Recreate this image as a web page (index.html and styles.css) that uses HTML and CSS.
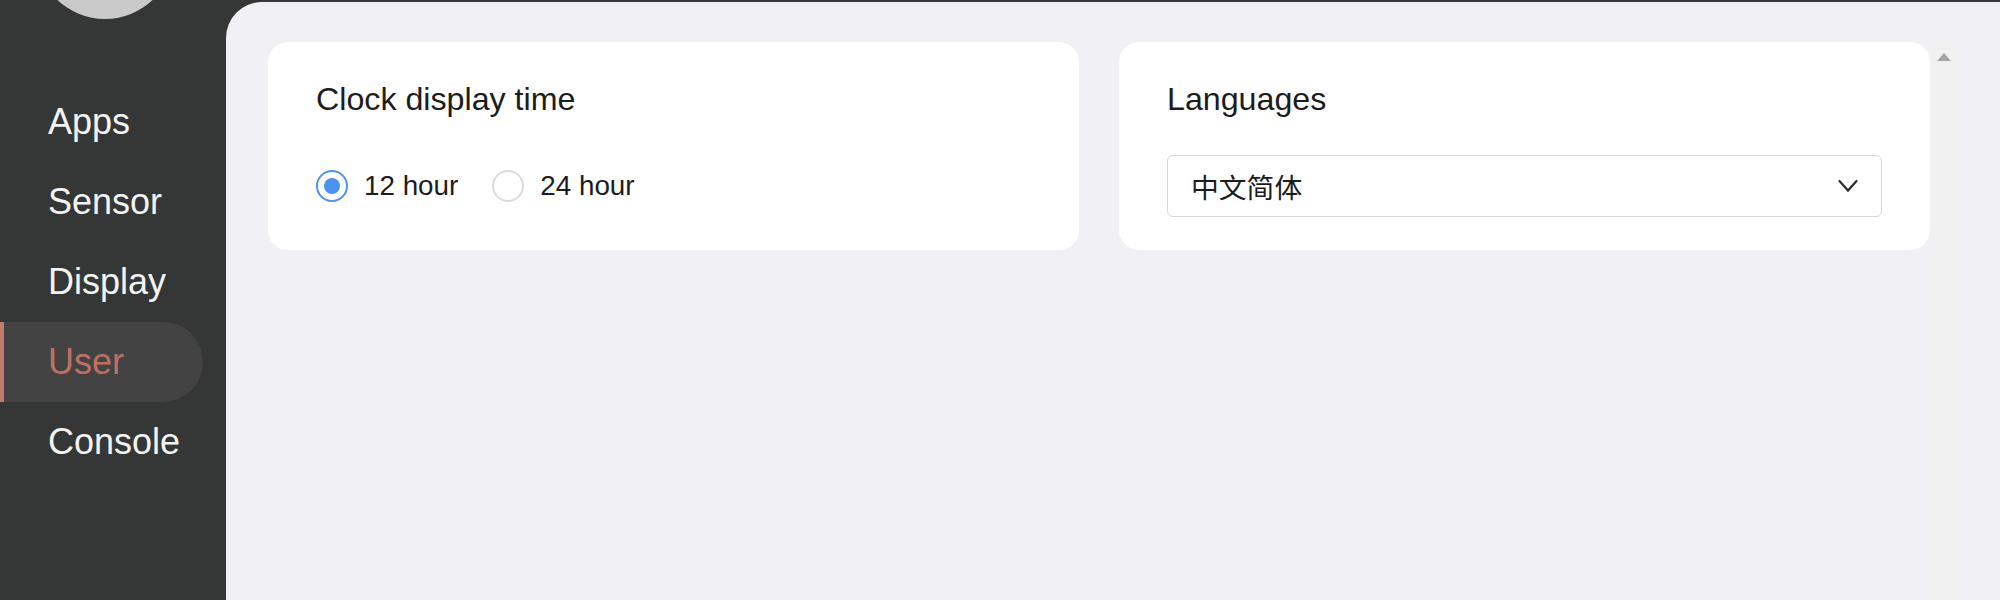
FILE: index.html
```html
<!DOCTYPE html>
<html lang="en">
<head>
<meta charset="utf-8">
<title>Settings - User</title>
<link rel="stylesheet" href="styles.css">
</head>
<body>
<div class="app">
  <aside class="sidebar">
    <div class="avatar"></div>
    <nav class="nav">
      <div class="nav-item">Apps</div>
      <div class="nav-item">Sensor</div>
      <div class="nav-item">Display</div>
      <div class="nav-item active">User</div>
      <div class="nav-item">Console</div>
    </nav>
  </aside>
  <main class="main">
    <div class="scroller">
      <div class="cards">
        <section class="card">
          <div class="card-title">Clock display time</div>
          <div class="control-row">
            <label class="radio-option">
              <span class="radio checked"><span class="dot"></span></span>
              <span class="radio-label">12 hour</span>
            </label>
            <label class="radio-option">
              <span class="radio"></span>
              <span class="radio-label">24 hour</span>
            </label>
          </div>
        </section>
        <section class="card">
          <div class="card-title">Languages</div>
          <div class="control-row">
            <div class="select">
              <span class="select-value">中文简体</span>
              <svg class="chevron" width="20" height="14" viewBox="0 0 20 14">
                <polyline points="1.5,2 10,11.5 18.5,2" fill="none" stroke="#2b2b2b" stroke-width="2.2" stroke-linecap="round" stroke-linejoin="miter"/>
              </svg>
            </div>
          </div>
        </section>
      </div>
      <div class="scrollbar">
        <span class="scroll-up"></span>
      </div>
    </div>
  </main>
</div>
</body>
</html>
```

FILE: styles.css
```css
html, body {
  margin: 0;
  padding: 0;
  height: 100%;
}

body {
  background: #353736;
  font-family: "Liberation Sans", Arial, sans-serif;
  overflow: hidden;
}

.app {
  display: flex;
  height: 600px;
}

.sidebar {
  width: 226px;
  flex-shrink: 0;
  display: flex;
  flex-direction: column;
}

.avatar {
  width: 138px;
  height: 138px;
  border-radius: 50%;
  background: #c9c9c9;
  margin: -119px 0 0 36px;
}

.nav {
  margin-top: 63px;
  display: flex;
  flex-direction: column;
}

.nav-item {
  height: 80px;
  display: flex;
  align-items: center;
  padding-left: 48px;
  font-size: 36px;
  color: #f3f3f3;
}

.nav-item.active {
  width: 203px;
  box-sizing: border-box;
  padding-left: 44px;
  border-left: 4px solid #c27a6d;
  border-radius: 0 40px 40px 0;
  background: #434343;
  color: #bf7062;
}

.main {
  flex: 1;
  margin-top: 2px;
  background: #f0f0f5;
  border-top-left-radius: 36px;
  padding: 40px 42px 0 42px;
  display: flex;
}

.scroller {
  flex: 1;
  display: flex;
}

.cards {
  flex: 1;
  display: grid;
  grid-template-columns: 1fr 1fr;
  column-gap: 40px;
  align-content: start;
}

.card {
  background: #ffffff;
  border-radius: 20px;
  padding: 39px 48px 33px 48px;
}

.card-title {
  font-size: 32.2px;
  line-height: 37px;
  color: #1c1c1c;
  margin-bottom: 37px;
}

.control-row {
  height: 62px;
  display: flex;
  align-items: center;
  gap: 34px;
}

.radio-option {
  display: flex;
  align-items: center;
  gap: 16px;
}

.radio {
  width: 32px;
  height: 32px;
  box-sizing: border-box;
  border-radius: 50%;
  border: 2px solid #dcdcdc;
  background: #ffffff;
  display: flex;
  align-items: center;
  justify-content: center;
}

.radio.checked {
  border-color: #4a92f4;
}

.dot {
  width: 16px;
  height: 16px;
  border-radius: 50%;
  background: #4a92f4;
}

.radio-label {
  font-size: 27.8px;
  color: #1c1c1c;
}

.select {
  flex: 1;
  height: 62px;
  box-sizing: border-box;
  border: 1px solid #d9d9d9;
  border-radius: 6px;
  padding: 0 23px;
  display: flex;
  align-items: center;
  justify-content: space-between;
}

.select-value {
  font-family: "Noto Sans CJK SC", "Liberation Sans", sans-serif;
  font-size: 27.8px;
  color: #1c1c1c;
}

.chevron {
  display: block;
}

.scrollbar {
  width: 28px;
  flex-shrink: 0;
  background: #f1f1f1;
  display: flex;
  flex-direction: column;
  align-items: center;
}

.scroll-up {
  margin-top: 11px;
  width: 0;
  height: 0;
  border-left: 7px solid transparent;
  border-right: 7px solid transparent;
  border-bottom: 8px solid #a3a3a3;
}
```
